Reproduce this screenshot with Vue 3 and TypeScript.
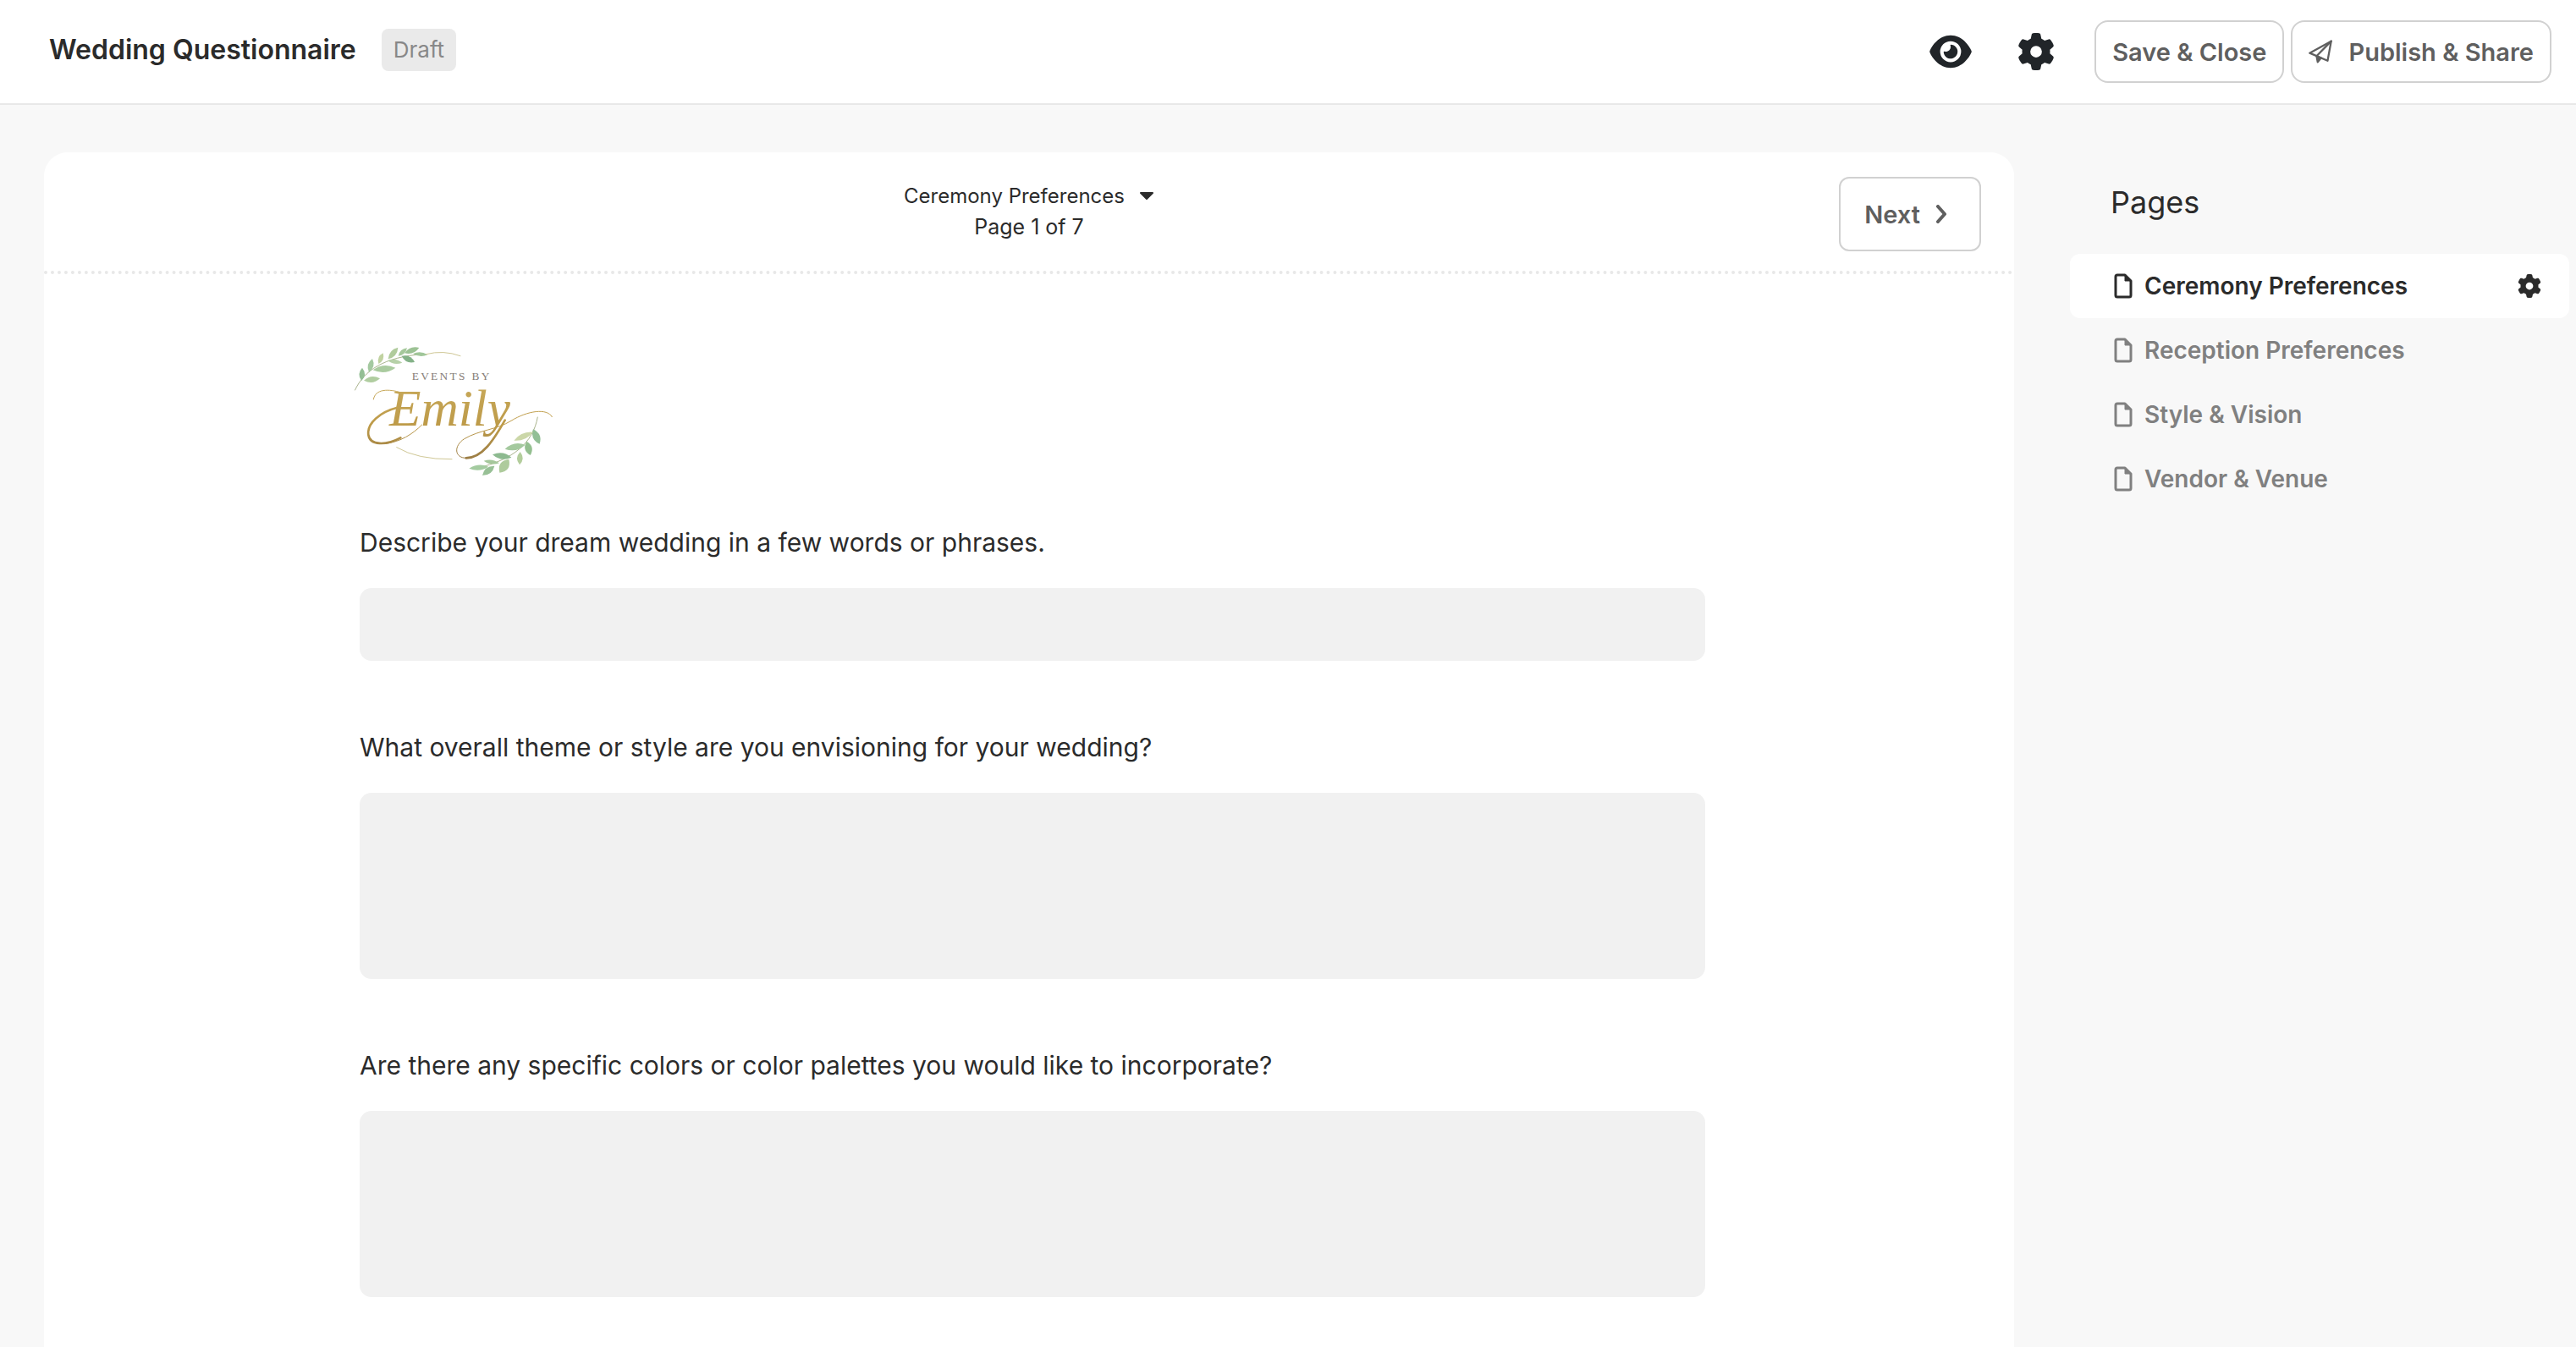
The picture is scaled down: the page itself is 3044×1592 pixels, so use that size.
<script setup lang="ts">
import { ref } from 'vue'

interface Question {
  id: string
  label: string
  multiline: boolean
}

const pages: string[] = ['Ceremony Preferences', 'Reception Preferences', 'Style & Vision', 'Vendor & Venue']
const activePage = ref<string>(pages[0])

const questions: Question[] = [
  { id: 'dream', label: 'Describe your dream wedding in a few words or phrases.', multiline: false },
  { id: 'theme', label: 'What overall theme or style are you envisioning for your wedding?', multiline: true },
  { id: 'colors', label: 'Are there any specific colors or color palettes you would like to incorporate?', multiline: true },
]
const answers = ref<Record<string, string>>({ dream: '', theme: '', colors: '' })

const gearPath =
  'M495.9 166.6c3.2 8.7 .5 18.4-6.4 24.6l-43.3 39.4c1.1 8.3 1.7 16.8 1.7 25.4s-.6 17.1-1.7 25.4l43.3 39.4c6.9 6.2 9.6 15.9 6.4 24.6c-4.4 11.9-9.7 23.3-15.8 34.3l-4.7 8.1c-6.6 11-14 21.4-22.1 31.2c-5.9 7.2-15.7 9.6-24.5 6.8l-55.7-17.7c-13.4 10.3-28.2 18.9-44 25.4l-12.5 57.1c-2 9.1-9 16.3-18.2 17.8c-13.8 2.3-28 3.5-42.5 3.5s-28.7-1.2-42.5-3.5c-9.2-1.5-16.2-8.7-18.2-17.8l-12.5-57.1c-15.8-6.5-30.6-15.1-44-25.4L83.1 425.9c-8.8 2.8-18.6 .3-24.5-6.8c-8.1-9.8-15.5-20.2-22.1-31.2l-4.7-8.1c-6.1-11-11.4-22.4-15.8-34.3c-3.2-8.7-.5-18.4 6.4-24.6l43.3-39.4C64.6 273.1 64 264.6 64 256s.6-17.1 1.7-25.4L22.4 191.2c-6.9-6.2-9.6-15.9-6.4-24.6c4.4-11.9 9.7-23.3 15.8-34.3l4.7-8.1c6.6-11 14-21.4 22.1-31.2c5.9-7.2 15.7-9.6 24.5-6.8l55.7 17.7c13.4-10.3 28.2-18.9 44-25.4l12.5-57.1c2-9.1 9-16.3 18.2-17.8C227.3 1.2 241.5 0 256 0s28.7 1.2 42.5 3.5c9.2 1.5 16.2 8.7 18.2 17.8l12.5 57.1c15.8 6.5 30.6 15.1 44 25.4l55.7-17.7c8.8-2.8 18.6-.3 24.5 6.8c8.1 9.8 15.5 20.2 22.1 31.2l4.7 8.1c6.1 11 11.4 22.4 15.8 34.3zM256 336a80 80 0 1 0 0-160 80 80 0 1 0 0 160z'
const eyePath =
  'M288 32c-80.8 0-145.5 36.8-192.6 80.6C48.6 156 17.3 208 2.5 243.7c-3.3 7.9-3.3 16.7 0 24.6C17.3 304 48.6 356 95.4 399.4C142.5 443.2 207.2 480 288 480s145.5-36.8 192.6-80.6c46.8-43.5 78.1-95.4 93-131.1c3.3-7.9 3.3-16.7 0-24.6c-14.9-35.7-46.2-87.7-93-131.1C433.5 68.8 368.8 32 288 32zM144 256a144 144 0 1 1 288 0 144 144 0 1 1 -288 0zm144-64c0 35.3-28.7 64-64 64c-7.1 0-13.9-1.2-20.3-3.3c-5.5-1.8-11.9 1.6-11.7 7.4c.3 6.9 1.3 13.8 3.2 20.7c13.7 51.2 66.4 81.6 117.6 67.9s81.6-66.4 67.9-117.6c-11.1-41.5-47.8-69.4-88.6-71.1c-5.8-.2-9.2 6.1-7.4 11.7c2.1 6.4 3.3 13.2 3.3 20.3z'

// Each leaf runs from its base on the stem to its tip, bulging by `bulge` to both sides.
interface Leaf {
  from: [number, number]
  to: [number, number]
  bulge: number
  fill: string
}
const leaves: Leaf[] = [
  { from: [82, 210], to: [84, 164], bulge: 20, fill: '#94bf95' },
  { from: [90, 209], to: [147, 202], bulge: 21, fill: '#b0cda0' },
  { from: [108, 180], to: [120, 132], bulge: 20, fill: '#a4c9a0' },
  { from: [122, 172], to: [202, 164], bulge: 24, fill: '#aacb9f' },
  { from: [142, 150], to: [158, 112], bulge: 17, fill: '#c0d2a0' },
  { from: [174, 138], to: [226, 146], bulge: 15, fill: '#b6d1a8' },
  { from: [176, 133], to: [211, 92], bulge: 20, fill: '#b0cb9c' },
  { from: [212, 122], to: [243, 94], bulge: 15, fill: '#a5c89b' },
  { from: [224, 122], to: [270, 144], bulge: 20, fill: '#84b288' },
  { from: [234, 112], to: [286, 93], bulge: 19, fill: '#9cc294' },
  { from: [264, 114], to: [316, 118], bulge: 14, fill: '#a0c699' },
  { from: [690, 382], to: [713, 434], bulge: 25, fill: '#92bf96' },
  { from: [690, 392], to: [622, 422], bulge: 20, fill: '#cbd7a8' },
  { from: [667, 425], to: [680, 474], bulge: 25, fill: '#94bf90' },
  { from: [662, 437], to: [590, 452], bulge: 23, fill: '#a4c99e' },
  { from: [644, 462], to: [642, 508], bulge: 20, fill: '#b3cd9c' },
  { from: [613, 482], to: [546, 472], bulge: 22, fill: '#8dba90' },
  { from: [604, 488], to: [571, 536], bulge: 32, fill: '#aecb9c' },
  { from: [570, 502], to: [515, 494], bulge: 14, fill: '#a5c79b' },
  { from: [553, 512], to: [510, 545], bulge: 22, fill: '#98c096' },
  { from: [532, 515], to: [463, 521], bulge: 18, fill: '#a4cba0' },
]

function leafPath(leaf: Leaf): string {
  const [x1, y1] = leaf.from
  const [x2, y2] = leaf.to
  const dx = x2 - x1
  const dy = y2 - y1
  const length = Math.hypot(dx, dy)
  const nx = (-dy / length) * leaf.bulge
  const ny = (dx / length) * leaf.bulge
  const mx = x1 + dx / 2
  const my = y1 + dy / 2
  return `M${x1} ${y1}Q${mx + nx} ${my + ny} ${x2} ${y2}Q${mx - nx} ${my - ny} ${x1} ${y1}Z`
}
</script>

<template>
  <div class="app">
    <header class="topbar">
      <h1 class="title">Wedding Questionnaire</h1>
      <span class="badge">Draft</span>
      <div class="tools">
        <button class="icon-button" type="button" aria-label="Preview">
          <svg class="eye" viewBox="0 0 576 512" aria-hidden="true"><path :d="eyePath" fill="currentColor" /></svg>
        </button>
        <button class="icon-button" type="button" aria-label="Settings">
          <svg class="gear" viewBox="0 0 512 512" aria-hidden="true"><path :d="gearPath" fill="currentColor" /></svg>
        </button>
      </div>
      <div class="actions">
        <button class="button" type="button">Save &amp; Close</button>
        <button class="button" type="button">
          <svg class="plane" viewBox="0 0 86 86" fill="none" stroke="currentColor" stroke-width="7" stroke-linejoin="round" stroke-linecap="round" aria-hidden="true">
            <path d="M82 5 4 48 69 76Z" />
            <path d="M82 5 29 59" />
            <path d="M29 59 33 81 45 66Z" fill="currentColor" />
          </svg>
          Publish &amp; Share
        </button>
      </div>
    </header>

    <div class="workspace">
      <main class="card">
        <div class="card-head">
          <div class="pager">
            <div class="page-select">
              <select v-model="activePage" aria-label="Page">
                <option v-for="page in pages" :key="page" :value="page">{{ page }}</option>
              </select>
              <svg class="caret" viewBox="0 0 18 10" aria-hidden="true">
                <path d="M2 1H16L9 8Z" fill="currentColor" stroke="currentColor" stroke-width="2" stroke-linejoin="round" />
              </svg>
            </div>
            <p class="page-count">Page 1 of 7</p>
          </div>
          <button class="button next" type="button">
            Next
            <svg class="chevron" viewBox="0 0 14 22" fill="none" stroke="currentColor" stroke-width="4" stroke-linecap="round" stroke-linejoin="round" aria-hidden="true">
              <path d="M3 2 11 11 3 20" />
            </svg>
          </button>
        </div>

        <form class="form" @submit.prevent>
          <svg class="logo" viewBox="75 72 690 480" role="img" aria-label="Events by Emily">
            <defs>
              <linearGradient id="gold" x1="0" y1="200" x2="0" y2="490" gradientUnits="userSpaceOnUse">
                <stop offset="0" stop-color="#c9ab5c" />
                <stop offset="0.6" stop-color="#bd9a48" />
                <stop offset="1" stop-color="#9a7c45" />
              </linearGradient>
            </defs>
            <g fill="none" stroke="#a9b38c" stroke-width="3">
              <path d="M58 244C90 175 160 125 300 116" />
              <path d="M706 338C690 430 620 490 490 520" />
            </g>
            <path v-for="(leaf, i) in leaves" :key="i" :d="leafPath(leaf)" :fill="leaf.fill" />
            <g fill="none" stroke="#cfc795" stroke-width="3" stroke-linecap="round">
              <path d="M310 116Q372 100 432 122" />
              <path d="M206 446Q280 490 402 488" />
            </g>
            <text class="logo-small" x="260" y="208">EVENTS BY</text>
            <g fill="none" stroke="url(#gold)" stroke-linecap="round">
              <path d="M124 276C130 238 178 238 222 252" stroke-width="3" />
              <path d="M206 306C150 320 100 360 106 402C112 440 168 440 220 412" stroke-width="8" />
              <path d="M168 433C220 426 262 400 296 366" stroke-width="3" />
              <path d="M590 350C550 420 510 484 452 484" stroke-width="8" />
              <path d="M452 484C410 484 408 440 446 416C500 384 560 384 612 352C670 316 740 306 757 338" stroke-width="3" />
            </g>
            <text class="logo-name" x="180" y="368">Emily</text>
          </svg>

          <div v-for="question in questions" :key="question.id" class="question">
            <label :for="question.id">{{ question.label }}</label>
            <textarea v-if="question.multiline" :id="question.id" v-model="answers[question.id]" class="field area"></textarea>
            <input v-else :id="question.id" v-model="answers[question.id]" class="field" type="text" />
          </div>
        </form>
      </main>

      <aside class="sidebar">
        <h2 class="sidebar-title">Pages</h2>
        <ul class="page-list">
          <li v-for="page in pages" :key="page" class="page-row" :class="{ active: page === activePage }">
            <button class="page-button" type="button" @click="activePage = page">
              <svg class="file" viewBox="0 0 22 30" aria-hidden="true">
                <path d="M13 2H4Q2 2 2 4V26Q2 28 4 28H18Q20 28 20 26V9Z" fill="none" stroke="currentColor" stroke-width="3" stroke-linejoin="round" />
                <path d="M13 2V9H20Z" fill="currentColor" stroke="currentColor" stroke-linejoin="round" />
              </svg>
              {{ page }}
            </button>
            <button v-if="page === activePage" class="icon-button" type="button" aria-label="Page settings">
              <svg class="gear-small" viewBox="0 0 512 512" aria-hidden="true"><path :d="gearPath" fill="currentColor" /></svg>
            </button>
          </li>
        </ul>
      </aside>
    </div>
  </div>
</template>

<style>
body {
  margin: 0;
  background: #f8f8f8;
}
</style>

<style scoped>
.app {
  box-sizing: border-box;
  min-height: 100vh;
  display: flex;
  flex-direction: column;
  background: #f8f8f8;
  color: #2b2b2b;
  font-family: Inter, sans-serif;
}
button,
select,
input,
textarea {
  font: inherit;
  color: inherit;
}
svg {
  display: block;
  flex: none;
}
.topbar {
  display: flex;
  align-items: center;
  padding: 24px 29px 24px 58px;
  background: #fff;
  border-bottom: 2px solid #e8e8e8;
}
.title {
  margin: 0 30px 4px 0;
  font-size: 32px;
  line-height: 40px;
  font-weight: 600;
}
.badge {
  margin-bottom: 4px;
  padding: 0 14px;
  border-radius: 8px;
  background: #eaeaea;
  color: #888;
  font-size: 26px;
  line-height: 50px;
}
.tools {
  display: flex;
  align-items: center;
  gap: 54px;
  margin-left: auto;
  margin-right: 47px;
}
.icon-button {
  padding: 0;
  border: 0;
  background: none;
  cursor: pointer;
}
.tools .icon-button {
  color: #212529;
}
.eye {
  width: 50px;
  height: 44px;
}
.gear {
  width: 44px;
  height: 44px;
}
.actions {
  display: flex;
  gap: 8px;
}
.button {
  box-sizing: border-box;
  display: flex;
  align-items: center;
  height: 74px;
  padding: 0 19px;
  border: 2px solid #d1d1d1;
  border-radius: 16px;
  background: #fff;
  color: #5f5f5f;
  font-size: 29px;
  font-weight: 600;
  cursor: pointer;
}
.plane {
  width: 28px;
  height: 28px;
  margin-right: 19px;
}
.workspace {
  flex: 1;
  display: grid;
  grid-template-columns: minmax(0, 1fr) 590px;
  gap: 66px;
  padding: 56px 8px 0 52px;
}
.card {
  background: #fff;
  border-radius: 28px 28px 0 0;
}
.card-head {
  display: grid;
  grid-template-columns: 1fr auto 1fr;
  align-items: center;
  height: 140px;
  padding: 0 39px;
  border-bottom: 4px dotted #e8e8e8;
}
.pager {
  grid-column: 2;
  display: flex;
  flex-direction: column;
  align-items: center;
}
.page-select {
  display: grid;
  align-items: center;
}
.page-select select {
  grid-area: 1 / 1;
  appearance: none;
  margin: 0;
  padding: 0 35px 0 0;
  border: 0;
  background: none;
  font-size: 24px;
  line-height: 36px;
  cursor: pointer;
}
.caret {
  grid-area: 1 / 1;
  justify-self: end;
  width: 18px;
  height: 10px;
  pointer-events: none;
}
.page-count {
  margin: 0;
  font-size: 25px;
  line-height: 36px;
}
.next {
  grid-column: 3;
  align-self: end;
  justify-self: end;
  height: 88px;
  margin-bottom: 23px;
  padding: 0 38px 0 28px;
  border-radius: 12px;
  gap: 18px;
}
.chevron {
  width: 14px;
  height: 22px;
}
.form {
  padding: 80px 365px 58px 373px;
}
.logo {
  width: 230px;
  height: 160px;
  margin-bottom: 57px;
  overflow: visible;
}
.logo-small {
  fill: #857d77;
  font-family: 'Liberation Serif', serif;
  font-size: 40px;
  letter-spacing: 7px;
}
.logo-name {
  fill: url(#gold);
  font-family: 'Liberation Serif', serif;
  font-size: 184px;
  font-style: italic;
}
.question {
  display: flex;
  flex-direction: column;
  gap: 34px;
}
.question + .question {
  margin-top: 82px;
}
.question label {
  font-size: 30px;
  line-height: 40px;
}
.field {
  box-sizing: border-box;
  display: block;
  width: 100%;
  height: 86px;
  margin: 0;
  padding: 20px 24px;
  border: 0;
  border-radius: 14px;
  background: #f1f1f1;
  font-size: 30px;
  resize: none;
}
.area {
  height: 220px;
}
.sidebar-title {
  margin: 0;
  padding: 34px 48px 36px;
  font-size: 36px;
  line-height: 50px;
  font-weight: 400;
}
.page-list {
  margin: 0;
  padding: 0;
  list-style: none;
}
.page-row {
  display: flex;
  align-items: center;
  padding-right: 33px;
  border-radius: 12px;
  color: #808080;
}
.page-row.active {
  background: #fff;
  color: #2b2b2b;
}
.page-button {
  flex: 1;
  display: flex;
  align-items: center;
  gap: 14px;
  height: 76px;
  padding: 0 0 0 52px;
  border: 0;
  background: none;
  font-size: 28px;
  font-weight: 600;
  text-align: left;
  cursor: pointer;
}
.file {
  width: 22px;
  height: 30px;
}
.gear-small {
  width: 28px;
  height: 28px;
}
</style>
